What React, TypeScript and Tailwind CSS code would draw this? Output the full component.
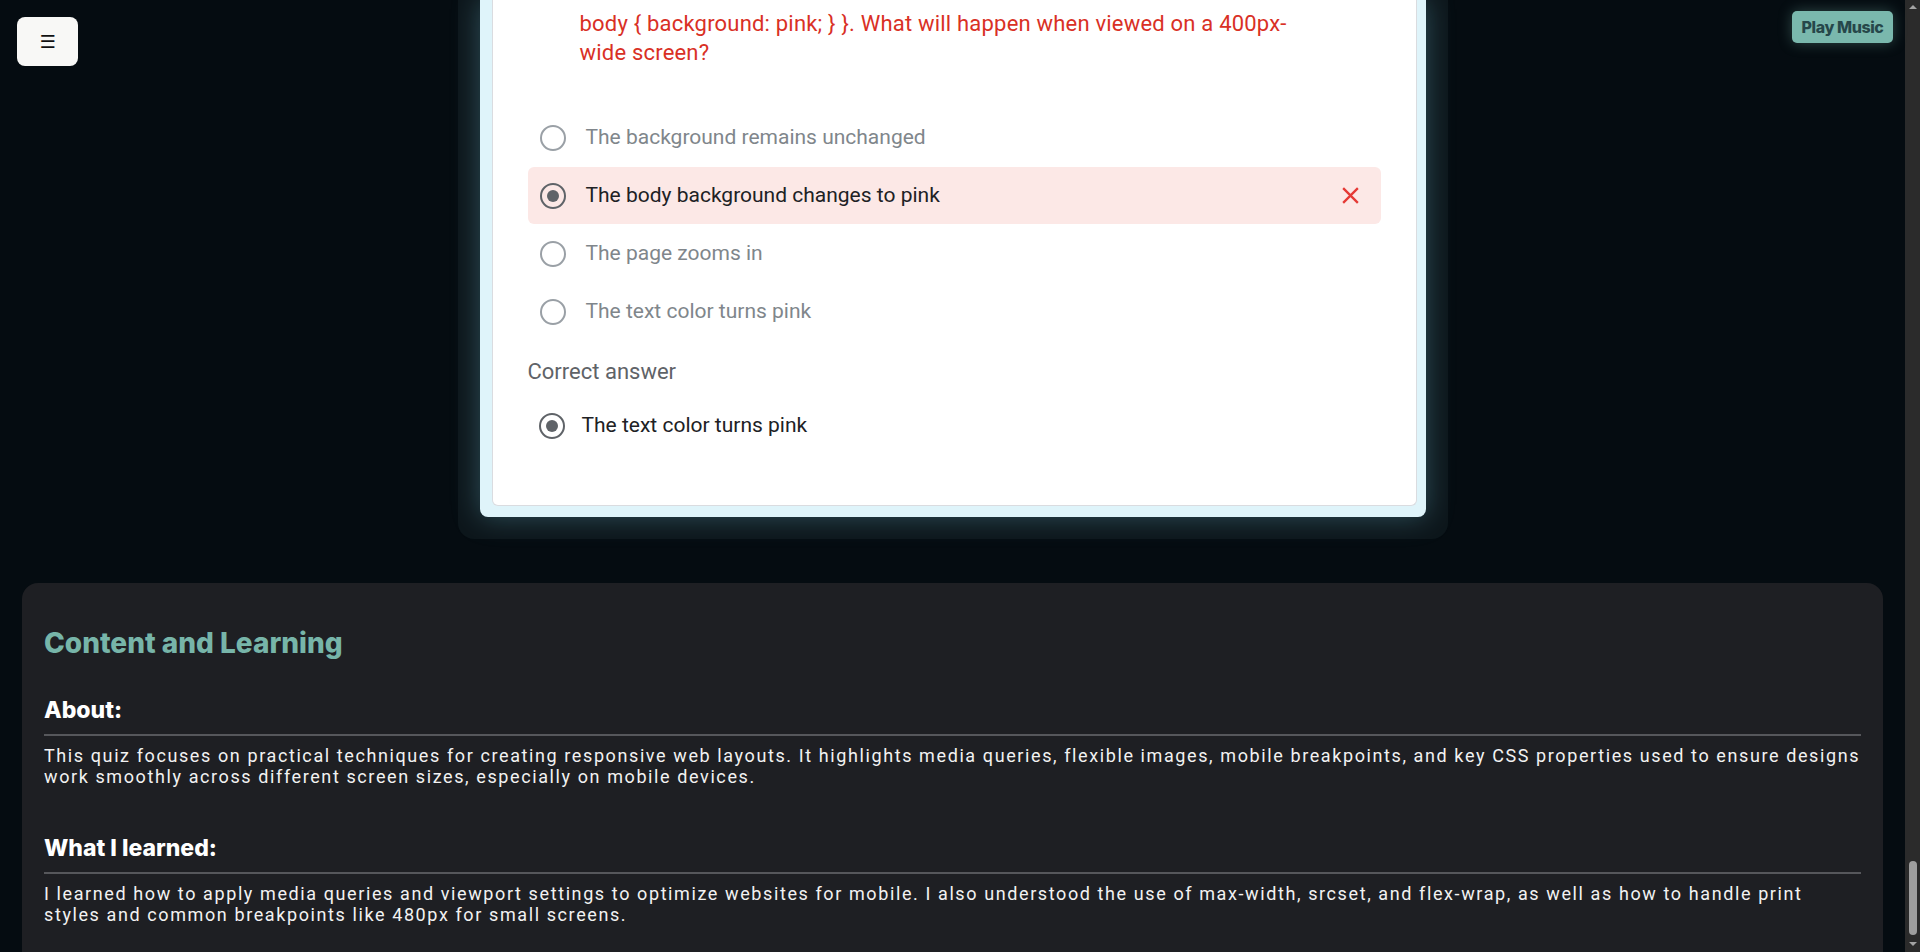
import React from "react";

// ─── Quiz bits ───────────────────────────────────────────────────

function Radio({ checked = false }: { checked?: boolean }) {
  return (
    <span
      className={
        "flex h-[26px] w-[26px] shrink-0 items-center justify-center rounded-full border-2 " +
        (checked ? "border-[#5f6368]" : "border-[#9aa0a6]")
      }
    >
      {checked && <span className="h-[12px] w-[12px] rounded-full bg-[#5f6368]" />}
    </span>
  );
}

function Option({
  text,
  checked = false,
  wrong = false,
}: {
  text: string;
  checked?: boolean;
  wrong?: boolean;
}) {
  return (
    <div
      className={
        "flex h-[57px] items-center gap-[20px] rounded-md pl-[12px] pr-[20px] " +
        (wrong ? "bg-[#fce8e6]" : "")
      }
    >
      <Radio checked={checked} />
      <span className={"flex-1 text-[21px] " + (checked ? "text-[#202124]" : "text-[#80868b]")}>
        {text}
      </span>
      {wrong && (
        <svg viewBox="0 0 20 20" className="h-[21px] w-[21px]" fill="none">
          <path d="M3 3 L17 17 M17 3 L3 17" stroke="#e53935" strokeWidth="2.2" />
        </svg>
      )}
    </div>
  );
}

function QuizCard() {
  return (
    <div className="mx-auto w-[990px] rounded-b-2xl bg-[#0d161b] px-[22px] pb-[22px]">
      <div className="rounded-b-lg bg-[#dff4fa] pb-[11px] pl-[12px] pr-[9px] shadow-[0_0_28px_rgba(110,190,210,0.35)]">
        <div className="rounded-b-md border-x border-b border-[#dadce0] bg-white px-[35px] pb-[51px] pt-[9px] font-['Roboto',sans-serif]">
          <p className="pl-[52px] text-[22px] leading-[29px] tracking-[0.2px] text-[#d93025]">
            body {"{"} background: pink; {"}"} {"}"}. What will happen when viewed on a 400px-
            <br />
            wide screen?
          </p>
          <div className="mt-[42px] flex flex-col gap-[1px]">
            <Option text="The background remains unchanged" />
            <Option text="The body background changes to pink" checked wrong />
            <Option text="The page zooms in" />
            <Option text="The text color turns pink" />
          </div>
          <p className="mt-[20px] text-[22px] leading-[24px] text-[#5f6368]">Correct answer</p>
          <div className="mt-[13px] flex h-[57px] items-center gap-[17px] pl-[11px]">
            <Radio checked />
            <span className="text-[21px] text-[#202124]">The text color turns pink</span>
          </div>
        </div>
      </div>
    </div>
  );
}

// ─── Content section ───────────────────────────────────────────────────

function Block({ title, children }: { title: string; children: React.ReactNode }) {
  return (
    <div>
      <h3 className="border-b-2 border-[#56575b] pb-[9px] font-['Inter',sans-serif] text-[23px] font-extrabold leading-[30px] text-white">
        {title}
      </h3>
      <p className="mt-[9px] font-['Roboto',sans-serif] text-[18px] leading-[21px] tracking-[1.6px] text-[#f2f2f2]">
        {children}
      </p>
    </div>
  );
}

function ContentSection() {
  return (
    <section className="mx-[22px] mt-[44px] flex flex-1 flex-col rounded-t-2xl bg-[#1e1f23] px-[22px] pt-[40px]">
      <h2 className="font-['Inter',sans-serif] text-[28px] font-extrabold leading-[40px] text-[#77b5a9]">
        Content and Learning
      </h2>
      <div className="mt-[32px] flex flex-col gap-[46px]">
        <Block title="About:">
          This quiz focuses on practical techniques for creating responsive web layouts. It highlights media
          queries, flexible images, mobile breakpoints, and key CSS properties used to ensure designs work
          smoothly across different screen sizes, especially on mobile devices.
        </Block>
        <Block title="What I learned:">
          I learned how to apply media queries and viewport settings to optimize websites for mobile. I also
          understood the use of max-width, srcset, and flex-wrap, as well as how to handle print styles and
          common breakpoints like 480px for small screens.
        </Block>
      </div>
    </section>
  );
}

// ─── Fake scrollbar (page is scrolled to the end) ─────────────────────────

function Scrollbar() {
  return (
    <div className="flex w-[15px] shrink-0 flex-col items-center bg-[#2b2b2b]">
      <span className="mt-[5px] h-0 w-0 border-x-[4px] border-b-[4px] border-x-transparent border-b-[#a3a3a3]" />
      <div className="flex-1" />
      <div className="mb-[7px] h-[74px] w-[8px] rounded-full bg-[#9e9e9e]" />
      <span className="mb-[6px] h-0 w-0 border-x-[4px] border-t-[4px] border-x-transparent border-t-[#a3a3a3]" />
    </div>
  );
}

// ─── Page ─────────────────────────────────────────────────────────────────

export default function App() {
  return (
    <div className="flex h-screen w-full overflow-hidden bg-[#050c11]">
      <main className="relative flex min-w-0 flex-1 flex-col">
        <QuizCard />
        <ContentSection />

        {/* ── Menu toggle ── */}
        <button className="absolute left-[17px] top-[17px] flex h-[49px] w-[61px] items-center justify-center rounded-lg bg-[#f8f8f6] font-['DejaVu_Sans',sans-serif] text-[18px] text-[#111]">
          ☰
        </button>

        {/* ── Music toggle ── */}
        <button className="absolute right-[12px] top-[11px] flex h-[32px] w-[101px] items-center justify-center rounded-[5px] bg-[#7ab8ad] font-['Inter',sans-serif] text-[16px] font-extrabold tracking-[-0.4px] text-[#26474a] shadow-[0_0_14px_rgba(122,184,173,0.35)]">
          Play Music
        </button>
      </main>
      <Scrollbar />
    </div>
  );
}
